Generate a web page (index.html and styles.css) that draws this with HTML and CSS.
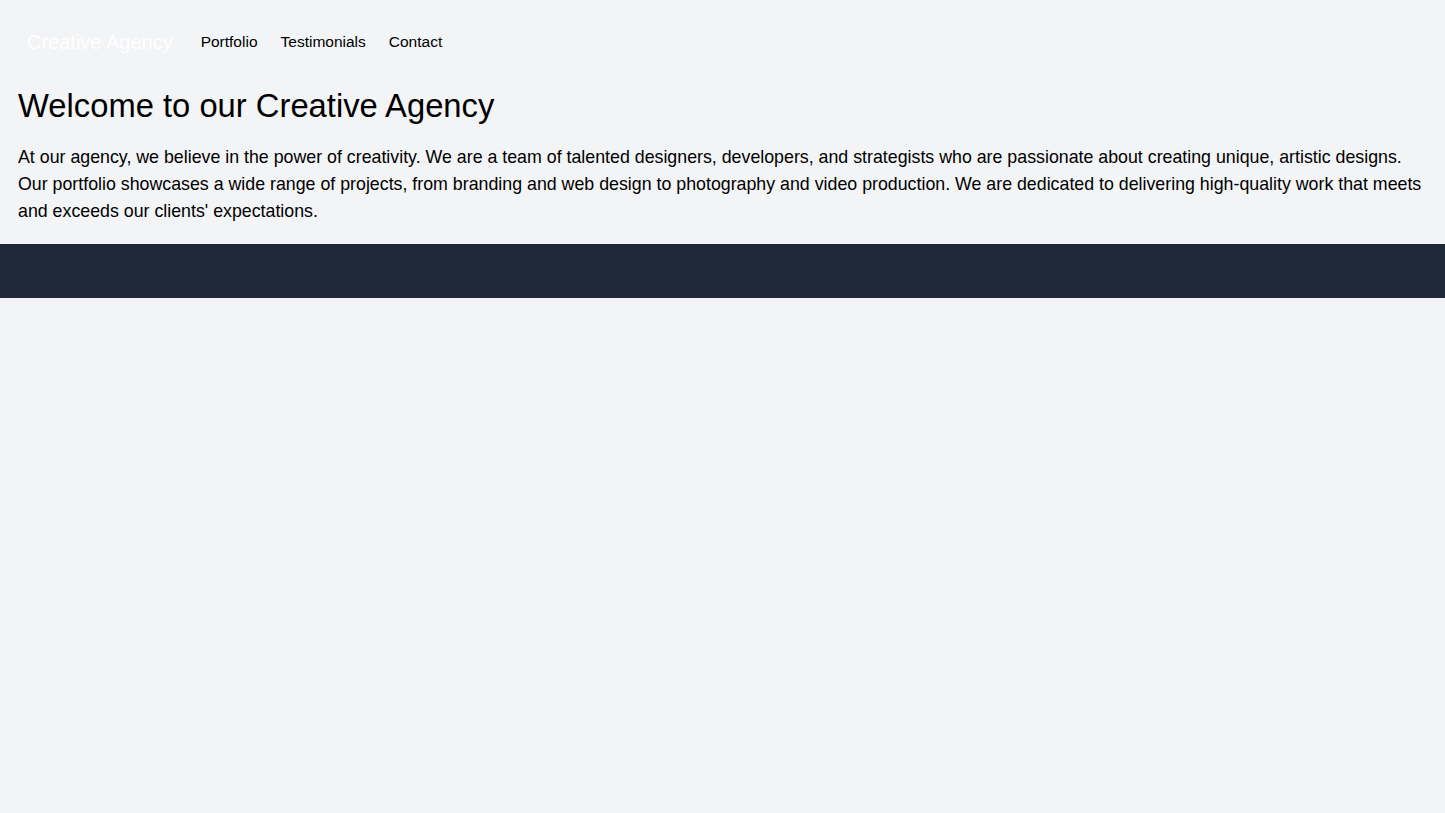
FILE: index.html
```html
<!DOCTYPE html>
<html lang="en">
<head>
<meta charset="utf-8">
<title>Creative Agency</title>
<link rel="stylesheet" href="styles.css">
</head>
<body>
<header class="site-header">
  <a class="brand" href="#">Creative Agency</a>
  <nav class="nav">
    <a href="#">Portfolio</a>
    <a href="#">Testimonials</a>
    <a href="#">Contact</a>
  </nav>
</header>
<main class="intro">
  <h1>Welcome to our Creative Agency</h1>
  <p>At our agency, we believe in the power of creativity. We are a team of talented designers, developers, and strategists who are passionate about creating unique, artistic designs. Our portfolio showcases a wide range of projects, from branding and web design to photography and video production. We are dedicated to delivering high-quality work that meets and exceeds our clients' expectations.</p>
</main>
<footer class="site-footer"></footer>
</body>
</html>
```
FILE: styles.css
```css
html, body {
  margin: 0;
  padding: 0;
}
body {
  background: #f3f4f6;
  color: #000;
  font-family: "Liberation Sans", Arial, sans-serif;
  min-height: 813px;
}
a {
  color: inherit;
  text-decoration: none;
}
.site-header {
  display: flex;
  align-items: center;
  padding: 28px 26px 0 27px;
}
.brand {
  color: #fff;
  font-size: 20px;
  line-height: 28px;
}
.nav {
  display: flex;
  gap: 23px;
  margin-left: 28px;
  font-size: 15.5px;
  line-height: 28px;
}
.intro {
  padding: 30px 18px 19px;
}
.intro h1 {
  margin: 0 0 18px;
  font-size: 32.75px;
  line-height: 40px;
  font-weight: 400;
}
.intro p {
  margin: 0;
  font-size: 17.8px;
  line-height: 27px;
}
.site-footer {
  background: #1f2937;
  height: 54px;
}
```
